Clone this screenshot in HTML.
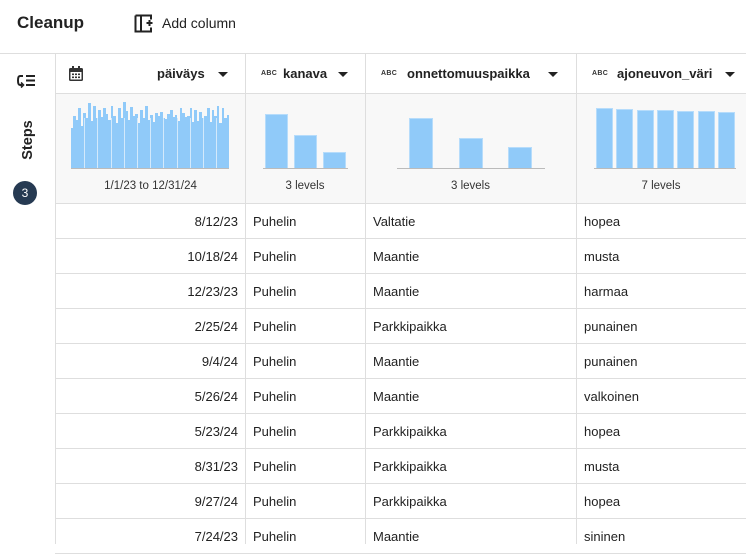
<!DOCTYPE html>
<html><head><meta charset="utf-8">
<style>
*{box-sizing:border-box;margin:0;padding:0}
body{width:746px;height:544px;overflow:hidden;background:#fff;font-family:"Liberation Sans",sans-serif;color:#222;position:relative}
.a{position:absolute}
.vl{position:absolute;top:53px;bottom:0;width:1px;background:#dedede}
.hl{position:absolute;left:55px;right:0;height:1px;background:#dedede}
.hdr{position:absolute;top:53px;height:40px;display:flex;align-items:center;font-size:13px;font-weight:bold;color:#222}
.caret{width:0;height:0;border-left:5px solid transparent;border-right:5px solid transparent;border-top:5px solid #222;position:absolute;top:72px}
.abc{font-size:7px;font-weight:bold;letter-spacing:0.3px;color:#333;position:absolute;top:70px}
.bar{position:absolute;background:#90caf9;border:1px solid #b6dcfb;border-bottom:none}
.base{position:absolute;height:1px;background:#bbb;top:168px}
.lvl{position:absolute;top:180px;font-size:11.5px;color:#333;text-align:center}
.cell{position:absolute;font-size:13px;color:#222;height:35px;line-height:35px}
</style></head><body>
<div class="a" style="left:17px;top:13px;font-size:17px;font-weight:bold;color:#222">Cleanup</div>
<svg class="a" style="left:134px;top:14px" width="20" height="20" viewBox="0 0 20 20"><path d="M1.5 1.5H13M1.5 1.5V17.5H13M1.5 1.5V17.5M7 1.5V17.5" stroke="#222" stroke-width="2" fill="none"/><path d="M13 1.5h4v4M17 13.5v4h-4" stroke="#222" stroke-width="2" fill="none"/><path d="M15.5 6v6M12.5 9h6" stroke="#222" stroke-width="2"/></svg>
<div class="a" style="left:162px;top:15px;font-size:14px;color:#222">Add column</div>
<div class="a" style="left:0;top:53px;width:746px;height:1px;background:#dedede"></div>
<div class="a" style="left:55px;top:93px;right:0;height:110px;background:#f8f8f8"></div>
<div class="a" style="left:55px;top:53px;bottom:0;width:1px;background:#dedede"></div>
<svg class="a" style="left:16px;top:73px" width="22" height="16" viewBox="0 0 22 16"><path d="M7 3H4Q2 3 2 7.5Q2 12 4 12H6" stroke="#222" stroke-width="2" fill="none"/><path d="M5 9.5l2.5 2.5L5 14.5" stroke="#222" stroke-width="1.6" fill="none"/><path d="M10 3h9M10 7.5h9M10 12h9" stroke="#222" stroke-width="2"/></svg>
<div class="a" style="left:8px;width:40px;transform:rotate(-90deg);transform-origin:center;font-size:14.5px;font-weight:bold;text-align:center;line-height:18px;top:131px">Steps</div>
<div class="a" style="left:13px;top:181px;width:24px;height:24px;border-radius:50%;background:#263a52;color:#fff;font-size:12px;text-align:center;line-height:24px">3</div>
<div class="vl" style="left:245px"></div>
<div class="vl" style="left:365px"></div>
<div class="vl" style="left:576px"></div>
<div class="hl" style="top:93px"></div>
<div class="hl" style="top:203px"></div>
<div id="rows"></div>
<svg class="a" style="left:68px;top:65px" width="16" height="17" viewBox="0 0 16 17"><rect x="1" y="3" width="14" height="13" rx="1.5" fill="#333"/><rect x="2.5" y="7" width="11" height="7.5" fill="#fff"/><rect x="4" y="1" width="2" height="4" fill="#333"/><rect x="10" y="1" width="2" height="4" fill="#333"/><g fill="#333"><rect x="4" y="8.5" width="2" height="1.6"/><rect x="7" y="8.5" width="2" height="1.6"/><rect x="10" y="8.5" width="2" height="1.6"/><rect x="4" y="11.5" width="2" height="1.6"/><rect x="7" y="11.5" width="2" height="1.6"/><rect x="10" y="11.5" width="2" height="1.6"/></g></svg>
<div class="hdr" style="left:157px">päiväys</div><div class="caret" style="left:218px"></div>
<div class="abc" style="left:261px">ABC</div><div class="hdr" style="left:283px">kanava</div><div class="caret" style="left:338px"></div>
<div class="abc" style="left:381px">ABC</div><div class="hdr" style="left:407px">onnettomuuspaikka</div><div class="caret" style="left:548px"></div>
<div class="abc" style="left:592px">ABC</div><div class="hdr" style="left:617px">ajoneuvon_väri</div><div class="caret" style="left:725px"></div>
<div id="h1"></div>
<div class="base" style="left:71px;width:158px"></div>
<div class="bar" style="left:265px;width:23px;top:114px;height:54px"></div>
<div class="bar" style="left:294px;width:23px;top:135px;height:33px"></div>
<div class="bar" style="left:323px;width:23px;top:152px;height:16px"></div>
<div class="base" style="left:263px;width:85px"></div>
<div class="bar" style="left:409px;width:24px;top:118px;height:50px"></div>
<div class="bar" style="left:459px;width:24px;top:138px;height:30px"></div>
<div class="bar" style="left:508px;width:24px;top:147px;height:21px"></div>
<div class="base" style="left:397px;width:148px"></div>
<div id="h4"></div>
<div class="base" style="left:594px;width:142px"></div>
<div class="lvl" style="left:56px;width:189px">1/1/23 to 12/31/24</div>
<div class="lvl" style="left:245px;width:120px">3 levels</div>
<div class="lvl" style="left:365px;width:211px">3 levels</div>
<div class="lvl" style="left:576px;width:170px">7 levels</div>
<script>
var rows=[["8/12/23","Valtatie","hopea"],["10/18/24","Maantie","musta"],["12/23/23","Maantie","harmaa"],["2/25/24","Parkkipaikka","punainen"],["9/4/24","Maantie","punainen"],["5/26/24","Maantie","valkoinen"],["5/23/24","Parkkipaikka","hopea"],["8/31/23","Parkkipaikka","musta"],["9/27/24","Parkkipaikka","hopea"],["7/24/23","Maantie","sininen"]];
var h="";
rows.forEach(function(r,i){var t=203+i*35;
h+='<div class="cell" style="left:56px;width:182px;text-align:right;top:'+(t+1)+'px">'+r[0]+'</div>';
h+='<div class="cell" style="left:253px;top:'+(t+1)+'px">Puhelin</div>';
h+='<div class="cell" style="left:373px;top:'+(t+1)+'px">'+r[1]+'</div>';
h+='<div class="cell" style="left:584px;top:'+(t+1)+'px">'+r[2]+'</div>';
h+='<div class="hl" style="top:'+(t+35)+'px"></div>';});
document.getElementById("rows").innerHTML=h;
var hs=[40,52,48,60,42,55,50,65,47,62,50,58,51,60,54,48,62,52,45,60,50,66,57,48,61,52,54,45,58,50,62,48,53,46,55,52,56,50,49,54,58,51,53,47,60,55,51,52,60,46,58,47,56,50,52,60,46,58,52,62,45,60,50,53];
var b="",n=hs.length,w=158/n;
for(var i=0;i<n;i++){var hh=hs[i];b+='<div class="a" style="background:#90caf9;left:'+(71+i*w).toFixed(2)+'px;width:'+(w+0.3).toFixed(2)+'px;top:'+(168-hh)+'px;height:'+hh+'px"></div>';}
for(var k=1;k<12;k++)b+='<div class="a" style="background:#d3e9fb;left:'+(71+k*13.2).toFixed(1)+'px;width:1px;top:118px;height:50px"></div>';
document.getElementById("h1").innerHTML=b;
var t4=[108,109,110,110,111,111,112],c="";
t4.forEach(function(t,i){c+='<div class="bar" style="left:'+(596+i*20.3).toFixed(1)+'px;width:17px;top:'+t+'px;height:'+(168-t)+'px"></div>';});
document.getElementById("h4").innerHTML=c;
</script>
</body></html>
